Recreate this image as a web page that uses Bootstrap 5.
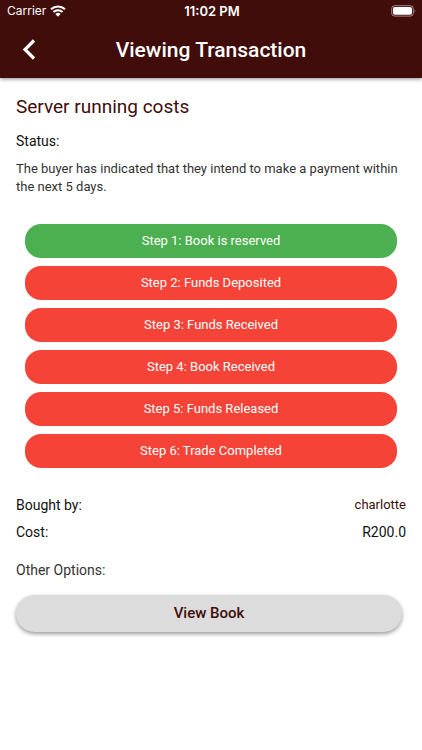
<!DOCTYPE html>
<html lang="en">
<head>
<meta charset="utf-8">
<meta name="viewport" content="width=device-width, initial-scale=1">
<title>Viewing Transaction</title>
<link href="https://cdn.jsdelivr.net/npm/bootstrap@5.3.0/dist/css/bootstrap.min.css" rel="stylesheet">
<style>
body { font-family: Roboto, "Liberation Sans", sans-serif; font-size: 14px; line-height: 18px; color: #111; background: #fff; }
.app-header { background: #400d0a; box-shadow: 0 1px 4px rgba(0,0,0,.45); }
.status-bar { font-family: Inter, "Liberation Sans", sans-serif; height: 22px; font-size: 12px; display: grid; grid-template-columns: 1fr auto 1fr; padding: 0 5px 0 7px; }
.clock { font-size: 13px; }
.title-bar { height: 56px; display: grid; grid-template-columns: 58px 1fr 58px; }
.page-title { font-size: 21px; line-height: 28px; font-weight: 500; }
.back-btn { height: 56px; }
.brand-text { color: #400d0a; }
.book-title { font-size: 19px; line-height: 26px; margin-bottom: 12px; font-weight: 400; }
.status-copy { font-size: 13px; color: #333; margin: 10px 0 28px; }
.steps { font-size: 13px; gap: 8px; padding: 0 9px; margin-bottom: 28px; }
.step { height: 34px; border-radius: 16px; background: #f54337; color: #fff; }
.step-done { background: #4caf50; }
.details { row-gap: 9px; margin-bottom: 20px; }
.buyer-link { font-size: 13px; }
.options-label { margin-bottom: 16px; color: #333; }
.view-btn, .view-btn:hover { height: 37px; font-size: 15px; font-weight: 500; background: #dcdcdc; color: #400d0a; box-shadow: 0 2px 4px rgba(0,0,0,.4); }
</style>
</head>
<body>
<header class="app-header text-white">
  <div class="status-bar align-items-center">
    <div class="d-flex align-items-center gap-1">
      <span>Carrier</span>
      <svg width="16" height="12" viewBox="0 0 16 12" aria-hidden="true"><g fill="none" stroke="#fff" stroke-width="2"><path d="M1 4.3a10.2 10.2 0 0 1 14 0"/><path d="M3.4 7a6.8 6.8 0 0 1 9.2 0"/></g><path d="M8 11.7 5.4 9a3.8 3.8 0 0 1 5.2 0z" fill="#fff"/></svg>
    </div>
    <div class="clock fw-semibold">11:02 PM</div>
    <svg class="ms-auto" width="26" height="12" viewBox="0 0 26 12" aria-hidden="true"><rect x=".7" y=".7" width="21.6" height="10.4" rx="3" fill="none" stroke="#fff" stroke-opacity=".5"/><rect x="2" y="2" width="19" height="7.8" rx="1.8" fill="#fff"/><path d="M23.6 4.2q1.7 1.7 0 3.6z" fill="#fff" fill-opacity=".6"/></svg>
  </div>
  <div class="title-bar align-items-center">
    <button class="back-btn btn border-0 p-0 d-flex align-items-center justify-content-center" type="button" aria-label="Back">
      <svg width="14" height="22" viewBox="0 0 14 22" aria-hidden="true"><path d="M12 1.5 3 10.5l9 9" fill="none" stroke="#fff" stroke-width="3.2"/></svg>
    </button>
    <h1 class="page-title text-center text-nowrap mb-0">Viewing Transaction</h1>
  </div>
</header>
<main class="px-3 py-3">
  <h2 class="book-title brand-text">Server running costs</h2>
  <div>Status:</div>
  <p class="status-copy">The buyer has indicated that they intend to make a payment within the next 5 days.</p>
  <ol class="steps list-unstyled d-flex flex-column">
    <li class="step step-done d-flex align-items-center justify-content-center">Step 1: Book is reserved</li>
    <li class="step d-flex align-items-center justify-content-center">Step 2: Funds Deposited</li>
    <li class="step d-flex align-items-center justify-content-center">Step 3: Funds Received</li>
    <li class="step d-flex align-items-center justify-content-center">Step 4: Book Received</li>
    <li class="step d-flex align-items-center justify-content-center">Step 5: Funds Released</li>
    <li class="step d-flex align-items-center justify-content-center">Step 6: Trade Completed</li>
  </ol>
  <div class="details d-flex flex-column">
    <div class="d-flex justify-content-between"><span>Bought by:</span><a href="#" class="buyer-link brand-text text-decoration-none">charlotte</a></div>
    <div class="d-flex justify-content-between"><span>Cost:</span><span>R200.0</span></div>
  </div>
  <div class="options-label">Other Options:</div>
  <div class="pe-1"><button class="view-btn btn w-100 rounded-pill border-0 py-0" type="button">View Book</button></div>
</main>
<script src="https://cdn.jsdelivr.net/npm/bootstrap@5.3.0/dist/js/bootstrap.bundle.min.js"></script>
</body>
</html>
